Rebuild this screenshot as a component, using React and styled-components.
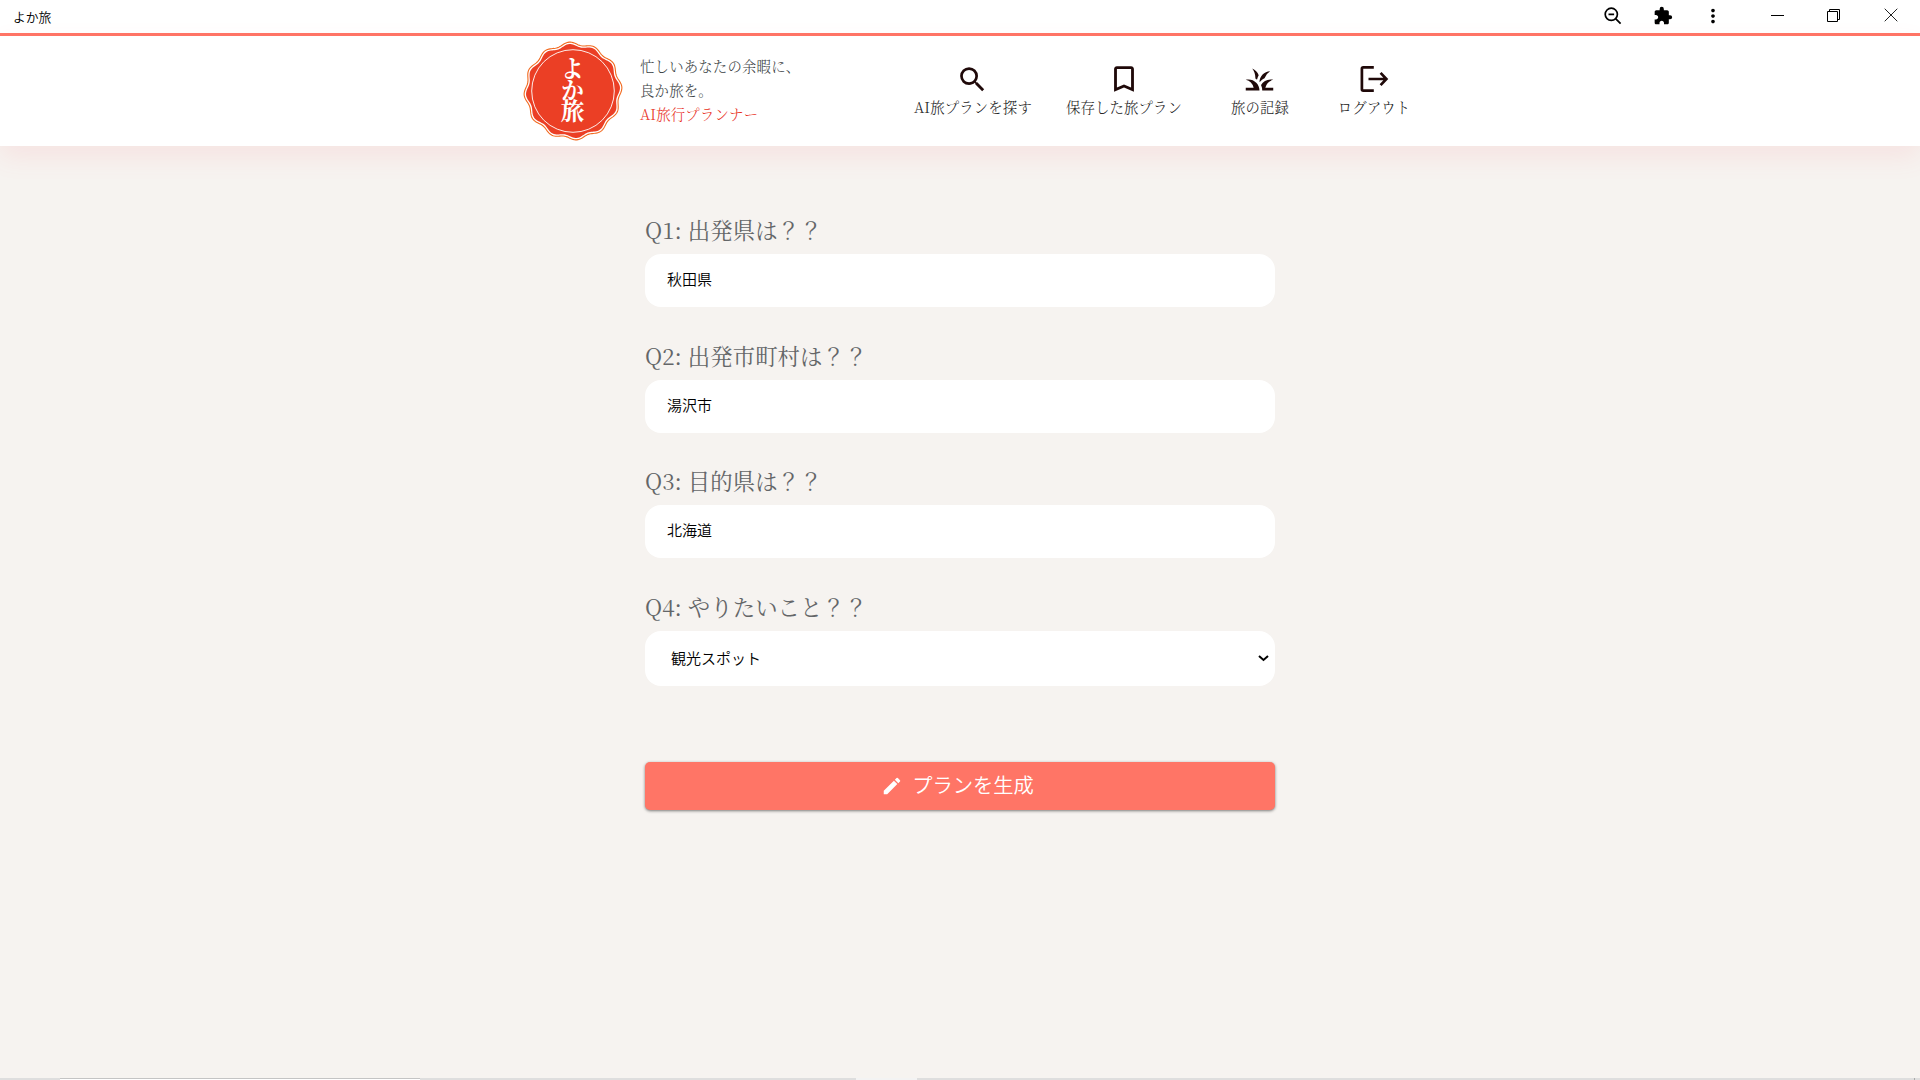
import React from 'react';
import styled, { createGlobalStyle } from 'styled-components';
import { MdSearch, MdBookmarkBorder, MdGrass, MdEdit, MdExtension, MdMoreVert } from 'react-icons/md';

const serif = '"Noto Serif CJK JP", "Noto Serif JP", "Liberation Serif", "Noto Sans CJK JP", serif';
const sans = '"Noto Sans CJK JP", sans-serif';

const GlobalStyle = createGlobalStyle`
  * { box-sizing: border-box; }
  body { margin: 0; background: #f6f3f0; overflow: hidden; }
`;

const Page = styled.div`
  display: flex;
  flex-direction: column;
  height: 1080px;
  width: 1920px;
`;

const TitleBar = styled.div`
  display: flex;
  align-items: center;
  justify-content: space-between;
  height: 36px;
  flex: none;
  border-bottom: 3px solid #ff7566;
  background: #fff;
  padding-left: 13px;
`;

const WindowTitle = styled.span`
  font: 350 12.8px/20px ${sans};
  color: #000;
  padding-top: 1px;
`;

const WindowTools = styled.div`
  display: flex;
  align-items: center;
  height: 30px;
  margin-bottom: 3px;
`;

const Tool = styled.div`
  display: grid;
  place-items: center;
  width: ${(p) => p.$w}px;
  height: 30px;
  padding-top: ${(p) => p.$drop || 0}px;
  svg { display: block; }
`;

const ToolGap = styled.div`
  width: 12px;
`;

const Header = styled.header`
  display: flex;
  justify-content: center;
  flex: none;
  height: 110px;
  background: #fff;
  box-shadow: 0 10px 25px rgba(255, 100, 110, 0.11);
`;

const HeaderInner = styled.div`
  display: flex;
  width: 898px;
  padding-left: 11.5px;
`;

const Logo = styled.svg`
  flex: none;
  width: 100px;
  height: 100px;
  margin-top: 5px;
`;

const Tagline = styled.div`
  flex: none;
  width: 257px;
  margin-left: 17.5px;
  padding-top: 18px;
  font: 300 14.4px/24px ${serif};
  letter-spacing: 0.18px;
`;

const TaglineRow = styled.div`
  color: ${(p) => (p.$accent ? '#e8301c' : '#3a3f44')};
  white-space: nowrap;
`;

const Nav = styled.nav`
  display: flex;
  flex: none;
`;

const NavItem = styled.a`
  display: flex;
  flex-direction: column;
  align-items: center;
  width: ${(p) => p.$w}px;
  padding-top: 27px;
  color: #1f0909;
`;

const NavIcon = styled.span`
  display: flex;
  align-items: center;
  justify-content: center;
  width: 32px;
  height: 32px;
  svg { display: block; flex: none; }
`;

const NavLabel = styled.span`
  font: 300 14.4px/20px ${serif};
  letter-spacing: 0.14px;
  color: #222;
  margin-top: 2px;
  padding-left: 1px;
  white-space: nowrap;
`;

const Form = styled.form`
  display: flex;
  flex-direction: column;
  flex: none;
  width: 630px;
  margin: 67px auto 0;
`;

const Question = styled.div`
  height: ${(p) => p.$h || 125.67}px;
`;

const Label = styled.label`
  display: block;
  height: 41px;
  font: 400 22.4px/32px ${serif};
  letter-spacing: 0.06px;
  color: #646668;
  white-space: nowrap;
`;

const Field = styled.div`
  display: flex;
  align-items: center;
  justify-content: space-between;
  height: ${(p) => (p.$select ? 55 : 53)}px;
  border-radius: 16px;
  background: #fff;
  padding: 0 6px ${(p) => (p.$select ? 1 : 3)}px ${(p) => (p.$select ? 26 : 22)}px;
  font: 350 15px/22px ${sans};
  color: #000;
`;

const Caret = styled.svg`
  width: 11px;
  height: 7px;
  margin-top: 2px;
`;

const Submit = styled.button`
  display: flex;
  align-items: center;
  justify-content: center;
  gap: 9px;
  height: 48px;
  margin-top: 76px;
  padding: 0 5px 0 0;
  border: 0;
  border-radius: 5px;
  background: #ff7566;
  box-shadow: 0 1px 3px rgba(0, 0, 0, 0.5);
  color: #fff;
  font: 350 20.3px/28px ${sans};
`;

const SubmitText = styled.span`
  padding-bottom: 3px;
`;

const BottomEdge = styled.div`
  display: flex;
  height: 2px;
  margin-top: auto;
`;

const EdgePart = styled.div`
  width: ${(p) => p.$w}px;
  background: ${(p) => p.$c};
  border-top: ${(p) => (p.$line ? '1px solid #c4c4c4' : '0')};
`;

const questions = [
  ['Q1: 出発県は？？', '秋田県'],
  ['Q2: 出発市町村は？？', '湯沢市'],
  ['Q3: 目的県は？？', '北海道'],
];

const LogoutIcon = () => (
  <svg width="32" height="32" viewBox="0 0 32 32" fill="none" stroke="currentColor" strokeWidth="2.7">
    <path d="M15.8 4.4H5.2Q3.9 4.4 3.9 5.7V26.3Q3.9 27.6 5.2 27.6H15.8" />
    <path d="M10.5 16H28M22.6 9.9L28.4 16L22.6 22.1" />
  </svg>
);

const navItems = [
  { label: 'AI旅プランを探す', width: 151, icon: <MdSearch size={33} /> },
  { label: '保存した旅プラン', width: 151, icon: <MdBookmarkBorder size={34} /> },
  { label: '旅の記録', width: 121, icon: <MdGrass size={33} /> },
  { label: 'ログアウト', width: 107, icon: <LogoutIcon /> },
];

const sealPath = (radius, wave) => {
  const points = [];
  for (let i = 0; i < 240; i += 1) {
    const a = (i / 240) * Math.PI * 2;
    const r = radius + wave * Math.cos(12 * (a + 1.65));
    points.push(`${(50 + r * Math.cos(a)).toFixed(2)},${(50 + r * Math.sin(a)).toFixed(2)}`);
  }
  return `M${points.join('L')}Z`;
};

const Seal = () => (
  <Logo viewBox="0 0 100 100">
    <path d={sealPath(47.5, 1.5)} fill="#fff" stroke="#f2691e" strokeWidth="1.1" />
    <path d={sealPath(45.6, 1.5)} fill="#eb3f25" />
    <circle cx="50" cy="50" r="41.3" fill="none" stroke="#fff" strokeWidth="0.9" />
    <text
      x="49.5"
      y="48"
      fill="#fff"
      fontFamily={serif}
      fontWeight="700"
      fontSize="23.5"
      letterSpacing="-2"
      textAnchor="middle"
      writingMode="vertical-rl"
    >
      よか旅
    </text>
  </Logo>
);

export default function App() {
  return (
    <Page>
      <GlobalStyle />
      <TitleBar>
        <WindowTitle>よか旅</WindowTitle>
        <WindowTools>
          <Tool $w={50} $drop={2}>
            <svg width="18" height="18" viewBox="0 0 18 18" fill="none" stroke="#000" strokeWidth="1.7">
              <circle cx="7.3" cy="7.3" r="6.1" /><path d="M4.5 7.3h5.6M11.6 11.6l5 5" />
            </svg>
          </Tool>
          <Tool $w={50} $drop={2}><MdExtension size={20} /></Tool>
          <Tool $w={50} $drop={2}><MdMoreVert size={22} /></Tool>
          <Tool $w={78}><svg width="13" height="13"><path d="M0 6.5h13" stroke="#000" /></svg></Tool>
          <Tool $w={34}>
            <svg width="13" height="13" fill="none" stroke="#000"><path d="M.5 2.5h10v10h-10zM2.5 2V.5h10v10H11" /></svg>
          </Tool>
          <ToolGap />
          <Tool $w={58}>
            <svg width="14" height="14" stroke="#222"><path d="M.7.7l12.6 12.6M13.3.7L.7 13.3" /></svg>
          </Tool>
        </WindowTools>
      </TitleBar>
      <Header>
        <HeaderInner>
          <Seal />
          <Tagline>
            <TaglineRow>忙しいあなたの余暇に、</TaglineRow>
            <TaglineRow>良か旅を。</TaglineRow>
            <TaglineRow $accent>AI旅行プランナー</TaglineRow>
          </Tagline>
          <Nav>
            {navItems.map((item) => (
              <NavItem key={item.label} $w={item.width}>
                <NavIcon>{item.icon}</NavIcon>
                <NavLabel>{item.label}</NavLabel>
              </NavItem>
            ))}
          </Nav>
        </HeaderInner>
      </Header>
      <Form>
        {questions.map(([label, value]) => (
          <Question key={label}>
            <Label>{label}</Label>
            <Field>{value}</Field>
          </Question>
        ))}
        <Question $h={96}>
          <Label>Q4: やりたいこと？？</Label>
          <Field $select>
            観光スポット
            <Caret viewBox="0 0 11 7" fill="none" stroke="#000" strokeWidth="2"><path d="M1 1l4.5 4L10 1" /></Caret>
          </Field>
        </Question>
        <Submit type="button"><MdEdit size={22} /><SubmitText>プランを生成</SubmitText></Submit>
      </Form>
      <BottomEdge>
        <EdgePart $w={60} $c="#dedede" />
        <EdgePart $w={360} $c="#fff" $line />
        <EdgePart $w={436} $c="#dedede" />
        <EdgePart $w={61} $c="#f3f3f3" />
        <EdgePart $w={997} $c="#dedede" />
        <EdgePart $w={1} $c="#aaa" />
        <EdgePart $w={5} $c="#dedede" />
      </BottomEdge>
    </Page>
  );
}
